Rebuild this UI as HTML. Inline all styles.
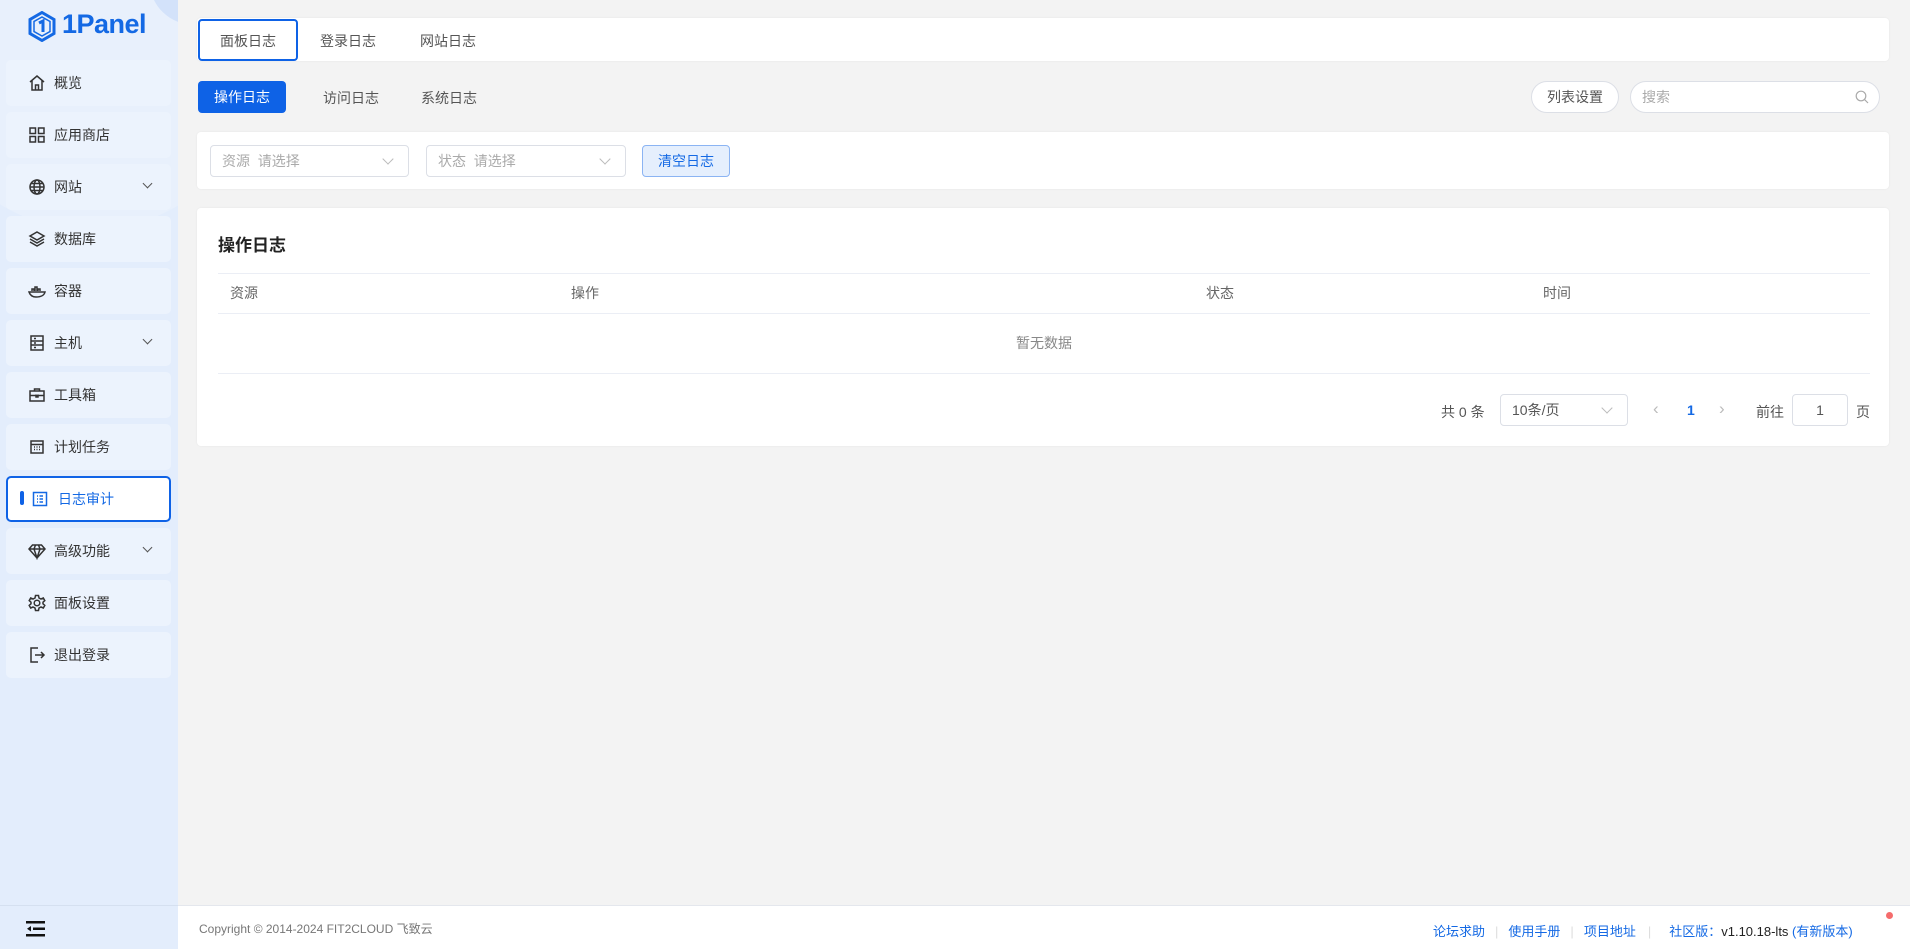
<!DOCTYPE html>
<html><head><meta charset="utf-8"><style>
*{box-sizing:border-box;margin:0;padding:0}
body{width:1910px;height:949px;overflow:hidden;background:#f3f3f3;font-family:"Liberation Sans","Noto Sans CJK SC",sans-serif;font-size:14px;color:#333;position:relative}
.abs{position:absolute}
#side{left:0;top:0;width:178px;height:949px;background:#e3edfc;overflow:hidden}
.circ{border-radius:50%}
.mi{position:absolute;left:6px;width:165px;height:46px;background:#ecf3fd;border-radius:5px;display:flex;align-items:center;padding-left:22px;font-size:14px;color:#333}
.mi svg{width:18px;height:18px;margin-right:8px;fill:none;stroke:#333;stroke-width:1.5}
.mi .ch{position:absolute;right:20px;top:16px;width:7px;height:7px;border-right:1px solid #555;border-bottom:1px solid #555;transform:rotate(45deg)}
.card{position:absolute;background:#fff;border-radius:4px;box-shadow:0 0 2px rgba(0,0,0,.06)}
.sel{position:absolute;height:32px;border:1px solid #dcdfe6;border-radius:4px;color:#aaa;padding-left:11px;line-height:30px;font-size:14px}
.sel:after{content:"";position:absolute;right:16px;top:9px;width:7px;height:7px;border-right:1px solid #bbb;border-bottom:1px solid #bbb;transform:rotate(45deg)}
.th{position:absolute;top:273px;line-height:40px;color:#666;font-size:14px}
</style></head><body>
<div id="side" class="abs">
  <div class="abs circ" style="left:-80px;top:-110px;width:340px;height:340px;background:rgba(255,255,255,.2)"></div>
  <div class="abs circ" style="left:150px;top:-60px;width:90px;height:85px;background:#d3e2fa"></div>
  <svg class="abs" style="left:28px;top:11px" width="28" height="31" viewBox="0 0 28 31"><path d="M14 1.5L26 8.5V22.5L14 29.5L2 22.5V8.5Z" fill="none" stroke="#1469e4" stroke-width="3"/><path d="M14 6L22 10.5V20.5L14 25L6 20.5V10.5Z" fill="none" stroke="#1469e4" stroke-width="1.5"/><path d="M11 12L15 10V21" fill="none" stroke="#1469e4" stroke-width="3"/></svg>
  <div class="abs" style="left:62px;top:9px;font-size:27px;font-weight:bold;color:#1469e4;letter-spacing:-0.5px">1Panel</div>
  <div class="mi" style="top:60px"><svg viewBox="0 0 18 18"><path d="M2 8L9 2L16 8M4 6.5V16H14V6.5M7.5 16V11H10.5V16"/></svg>概览</div>
  <div class="mi" style="top:112px"><svg viewBox="0 0 18 18"><rect x="2" y="2" width="5.5" height="5.5"/><rect x="10.5" y="2" width="5.5" height="5.5"/><rect x="2" y="10.5" width="5.5" height="5.5"/><rect x="10.5" y="10.5" width="5.5" height="5.5"/></svg>应用商店</div>
  <div class="mi" style="top:164px"><svg viewBox="0 0 18 18"><circle cx="9" cy="9" r="7"/><ellipse cx="9" cy="9" rx="3" ry="7"/><path d="M2 9H16M3 5.5H15M3 12.5H15"/></svg>网站<span class="ch"></span></div>
  <div class="mi" style="top:216px"><svg viewBox="0 0 18 18"><path d="M9 2L16 6L9 10L2 6Z M2 9L9 13L16 9 M2 12L9 16L16 12"/></svg>数据库</div>
  <div class="mi" style="top:268px"><svg viewBox="0 0 18 18"><path d="M1 10H17C16 14 12 15 8 15C4 15 2 13 1 10Z M4 9V7H6V9M7 9V5H9V9M10 9V7H12V9"/></svg>容器</div>
  <div class="mi" style="top:320px"><svg viewBox="0 0 18 18"><rect x="3" y="2" width="12" height="14"/><path d="M3 7H15M3 11H15M6 4.5H8M6 9H8M6 13.5H8"/></svg>主机<span class="ch"></span></div>
  <div class="mi" style="top:372px"><svg viewBox="0 0 18 18"><rect x="2" y="5" width="14" height="10"/><path d="M6.5 5V3H11.5V5M2 9.5H16M8 8.5V11H10V8.5"/></svg>工具箱</div>
  <div class="mi" style="top:424px"><svg viewBox="0 0 18 18"><rect x="3" y="3" width="12" height="12"/><path d="M3 6.5H15M6 9H7M8.5 9H9.5M11 9H12M6 11.5H7M8.5 11.5H9.5M11 11.5H12"/></svg>计划任务</div>
  <div class="mi" style="top:476px;background:#fff;border:2px solid #0e62e6;padding-left:20px;color:#1469e4;left:6px"><span class="abs" style="left:12px;top:13px;width:4px;height:14px;background:#0e62e6;border-radius:2px"></span><svg viewBox="0 0 18 18" style="stroke:#1469e4;margin-left:3px;margin-right:9px"><rect x="2.5" y="2.5" width="13" height="13"/><path d="M6 6H7M8.5 6H12M6 9H7M8.5 9H12M6 12H7M8.5 12H12"/></svg>日志审计</div>
  <div class="mi" style="top:528px"><svg viewBox="0 0 18 18"><path d="M4.5 3H13.5L17 7L9 16L1 7Z M1 7H17M6 7L9 16L12 7M6 7L7.5 3M12 7L10.5 3"/></svg>高级功能<span class="ch"></span></div>
  <div class="mi" style="top:580px"><svg viewBox="0 0 18 18"><circle cx="9" cy="9" r="2.8"/><path d="M7.5 1.5H10.5L11 4L13 5L15.3 4L16.8 6.6L15 8.2V9.8L16.8 11.4L15.3 14L13 13L11 14L10.5 16.5H7.5L7 14L5 13L2.7 14L1.2 11.4L3 9.8V8.2L1.2 6.6L2.7 4L5 5L7 4Z"/></svg>面板设置</div>
  <div class="mi" style="top:632px"><svg viewBox="0 0 18 18"><path d="M10 2H3V16H10M7 9H16M13 6L16 9L13 12"/></svg>退出登录</div>
  <div class="abs" style="left:0;top:905px;width:178px;height:1px;background:#d5e0f0"></div>
  <svg class="abs" style="left:26px;top:921px" width="20" height="16" viewBox="0 0 20 16"><rect x="0" y="0" width="19" height="2.5" fill="#111"/><rect x="7" y="6.5" width="12" height="2.5" fill="#111"/><rect x="0" y="13" width="19" height="2.5" fill="#111"/><path d="M1 7.7L5 5V10.5Z" fill="#111"/></svg>
</div>

<div class="card" style="left:197px;top:18px;width:1692px;height:43px"></div>
<div class="abs" style="left:198px;top:19px;width:100px;height:42px;border:2px solid #0e62e6;border-radius:4px;background:#fff"></div>
<div class="abs" style="left:220px;top:31px;color:#555">面板日志</div>
<div class="abs" style="left:320px;top:31px;color:#555">登录日志</div>
<div class="abs" style="left:420px;top:31px;color:#555">网站日志</div>

<div class="abs" style="left:198px;top:81px;width:88px;height:32px;background:#0e62e6;border-radius:4px;color:#fff;text-align:center;line-height:32px">操作日志</div>
<div class="abs" style="left:323px;top:88px;color:#555">访问日志</div>
<div class="abs" style="left:421px;top:88px;color:#555">系统日志</div>
<div class="abs" style="left:1531px;top:81px;width:88px;height:32px;border:1px solid #dcdfe6;background:#fff;border-radius:16px;text-align:center;line-height:30px;color:#555">列表设置</div>
<div class="abs" style="left:1630px;top:81px;width:250px;height:32px;border:1px solid #dcdfe6;background:#fff;border-radius:16px;line-height:30px;color:#aaa;padding-left:11px">搜索
 <svg class="abs" style="right:10px;top:8px" width="14" height="14" viewBox="0 0 14 14"><circle cx="6" cy="6" r="4.8" fill="none" stroke="#aaa" stroke-width="1.2"/><path d="M9.5 9.5L13 13" stroke="#aaa" stroke-width="1.2"/></svg></div>

<div class="card" style="left:197px;top:132px;width:1692px;height:57px"></div>
<div class="sel" style="left:210px;top:145px;width:199px">资源&nbsp; 请选择</div>
<div class="sel" style="left:426px;top:145px;width:200px">状态&nbsp; 请选择</div>
<div class="abs" style="left:642px;top:145px;width:88px;height:32px;background:#e5effd;border:1px solid #8bb4f3;border-radius:4px;color:#1469e4;text-align:center;line-height:30px">清空日志</div>

<div class="card" style="left:197px;top:208px;width:1692px;height:238px"></div>
<div class="abs" style="left:218px;top:231px;font-size:17px;font-weight:bold;color:#222">操作日志</div>
<div class="abs" style="left:218px;top:273px;width:1652px;height:1px;background:#ebeef5"></div>
<div class="th" style="left:230px">资源</div>
<div class="th" style="left:571px">操作</div>
<div class="th" style="left:1206px">状态</div>
<div class="th" style="left:1543px">时间</div>
<div class="abs" style="left:218px;top:313px;width:1652px;height:1px;background:#ebeef5"></div>
<div class="abs" style="left:218px;top:314px;width:1652px;line-height:59px;text-align:center;color:#888">暂无数据</div>
<div class="abs" style="left:218px;top:373px;width:1652px;height:1px;background:#ebeef5"></div>
<div class="abs" style="left:1441px;top:402px;color:#555">共 0 条</div>
<div class="sel" style="left:1500px;top:394px;width:128px;color:#555">10条/页</div>
<div class="abs" style="left:1653px;top:399px;color:#bbb;font-size:17px">‹</div>
<div class="abs" style="left:1687px;top:402px;color:#1469e4;font-weight:bold">1</div>
<div class="abs" style="left:1719px;top:399px;color:#bbb;font-size:17px">›</div>
<div class="abs" style="left:1756px;top:402px;color:#555">前往</div>
<div class="abs" style="left:1792px;top:394px;width:56px;height:32px;border:1px solid #dcdfe6;border-radius:4px;text-align:center;line-height:30px;color:#555">1</div>
<div class="abs" style="left:1856px;top:402px;color:#555">页</div>

<div class="abs" style="left:178px;top:905px;width:1732px;height:44px;background:#fff;border-top:1px solid #e4e7ed"></div>
<div class="abs" style="left:199px;top:920px;font-size:12px;color:#777">Copyright © 2014-2024 FIT2CLOUD 飞致云</div>
<div class="abs" style="left:1433px;top:921px;font-size:13px;color:#1469e4;white-space:nowrap">论坛求助<span style="color:#ddd;margin:0 10px">|</span>使用手册<span style="color:#ddd;margin:0 10px">|</span>项目地址<span style="color:#ddd;margin:0 10px 0 12px">|</span><span style="margin-left:8px">社区版：</span><span style="color:#222">v1.10.18-lts</span> (有新版本)</div>
<div class="abs circ" style="left:1886px;top:912px;width:7px;height:7px;background:#f56c6c"></div>
</body></html>
